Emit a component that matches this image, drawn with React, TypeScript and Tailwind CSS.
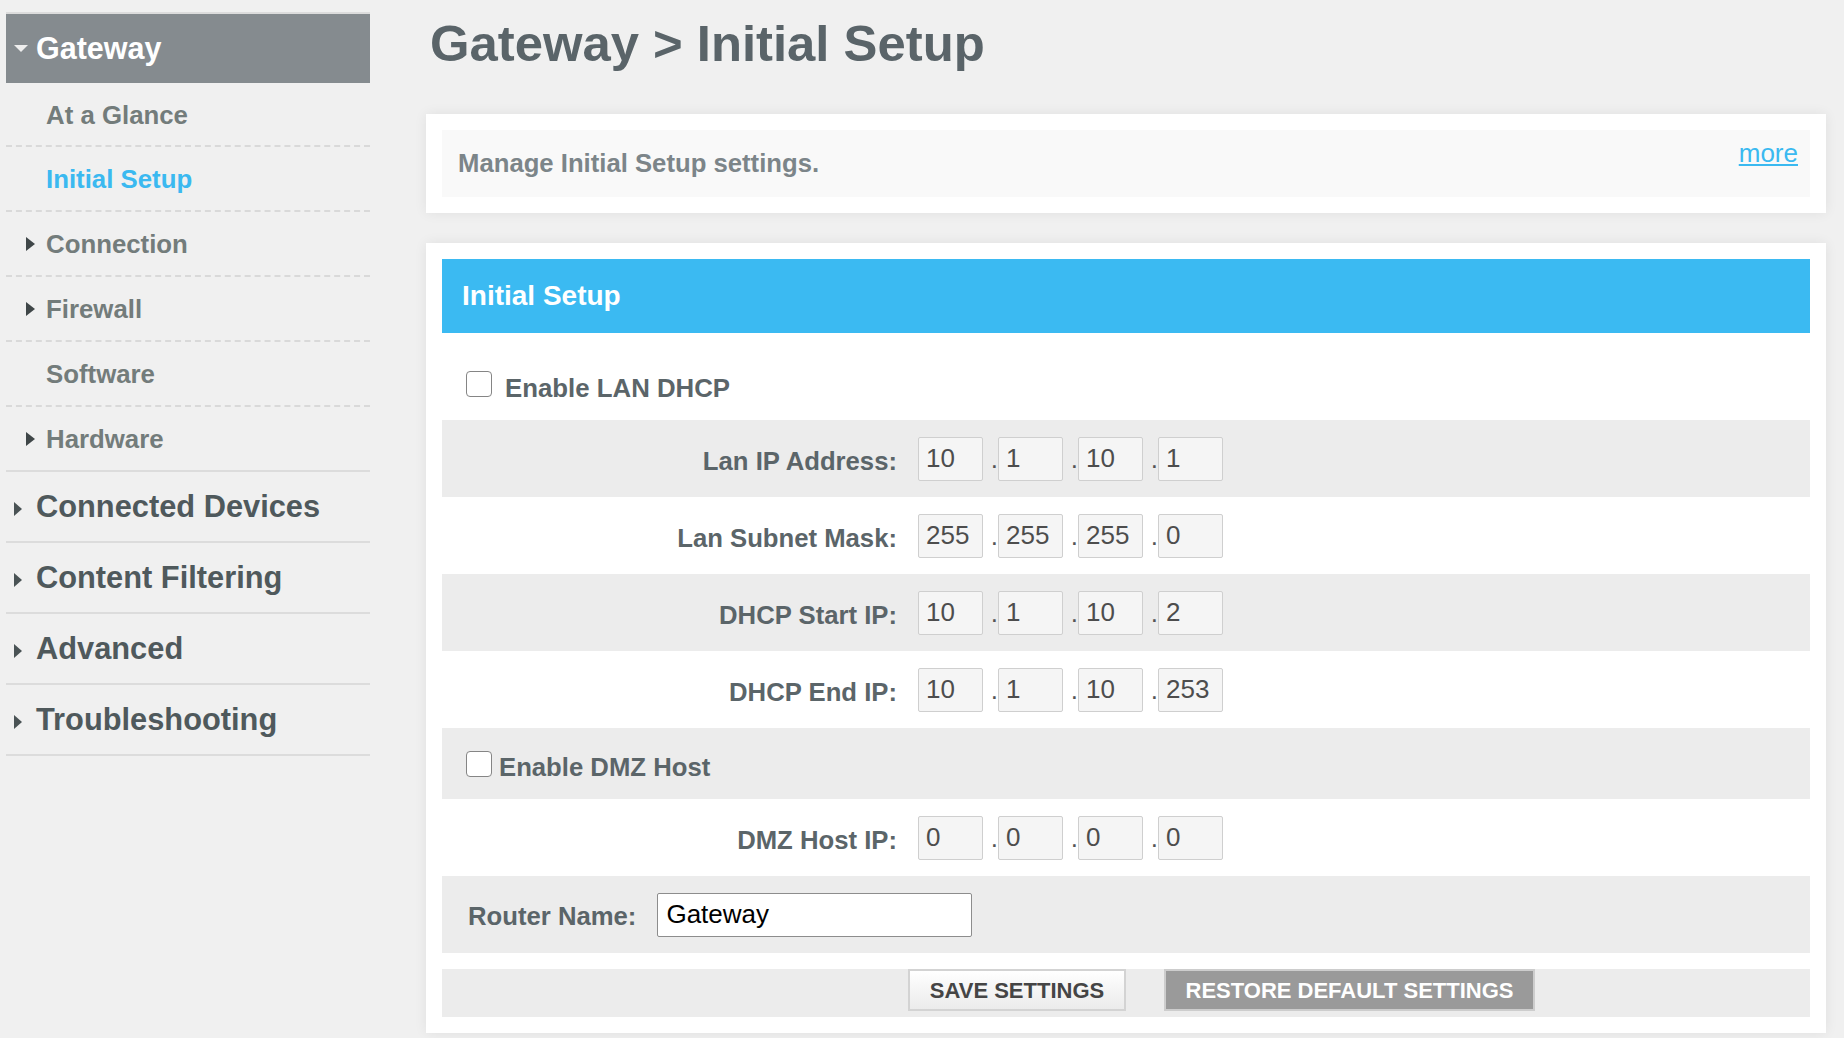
import React from "react";

function RightTri({ color = "#3f4648", w = 9, h = 14 }: { color?: string; w?: number; h?: number }) {
  return (
    <svg width={w} height={h} viewBox={`0 0 ${w} ${h}`}>
      <path d={`M0 0L${w} ${h / 2}L0 ${h}Z`} fill={color} />
    </svg>
  );
}

function SubItem({ text, arrow, active, solid, first }: { text: string; arrow?: boolean; active?: boolean; solid?: boolean; first?: boolean }) {
  return (
    <div
      className={`${first ? "h-[64px]" : "h-[65px]"} box-border border-b-2 ${solid ? "border-solid border-[#dcdcdc]" : "border-dashed border-[#d9d9d9]"} flex items-center`}
    >
      <span className="w-[40px] flex justify-end pr-[11px]">{arrow && <RightTri />}</span>
      <span className={`pt-[2px] text-[25.8px] font-bold ${active ? "text-[#3bb9f0]" : "text-[#737c7b]"}`}>{text}</span>
    </div>
  );
}

function TopItem({ text }: { text: string }) {
  return (
    <div className="h-[71px] box-border border-b-2 border-[#dcdcdc] flex items-center">
      <span className="w-[30px] pl-[8px] flex items-center pt-[4px]">
        <RightTri color="#4a5355" w={8} h={14} />
      </span>
      <span className="pt-[2px] text-[30.8px] font-bold text-[#4f595c]">{text}</span>
    </div>
  );
}

function IpRow({ label, vals, gray }: { label: string; vals: string[]; gray?: boolean }) {
  return (
    <div className={`h-[77px] flex items-center ${gray ? "bg-[#ececec]" : "bg-white"}`}>
      <div className="w-[455px] pt-[5px] text-right text-[25.7px] font-bold text-[#5b6569]">{label}</div>
      <div className="ml-[21px] flex items-center">
        {vals.map((v, i) => (
          <React.Fragment key={i}>
            {i > 0 && <span className="w-[15px] h-[44px] text-right text-[26px] leading-[44px] text-[#555]">.</span>}
            <input
              readOnly
              value={v}
              className="w-[65px] h-[44px] box-border border border-[#cfcfcf] rounded-[2px] bg-[#f5f5f5] pl-[7px] text-[26px] text-[#4d4d4d] outline-none"
            />
          </React.Fragment>
        ))}
      </div>
    </div>
  );
}

function Checkbox() {
  return <span className="block w-[26px] h-[26px] box-border border border-[#858585] rounded-[4px] bg-white shrink-0" />;
}

export default function App() {
  return (
    <div className="min-h-screen bg-[#f0f0f0] flex font-['Liberation_Sans',Arial,Helvetica,sans-serif]">
      <aside className="w-[364px] ml-[6px] mt-[12px] shrink-0">
        <div className="h-[71px] box-border border-t-2 border-[#dcdcdc] bg-[#858b8f] flex items-center">
          <span className="ml-[8px] flex">
            <svg width="14" height="7" viewBox="0 0 14 7">
              <path d="M0 0H14L7 7Z" fill="#eeeeee" />
            </svg>
          </span>
          <span className="ml-[8px] text-[30.5px] font-bold text-white">Gateway</span>
        </div>
        <SubItem text="At a Glance" first />
        <SubItem text="Initial Setup" active />
        <SubItem text="Connection" arrow />
        <SubItem text="Firewall" arrow />
        <SubItem text="Software" />
        <SubItem text="Hardware" arrow solid />
        <TopItem text="Connected Devices" />
        <TopItem text="Content Filtering" />
        <TopItem text="Advanced" />
        <TopItem text="Troubleshooting" />
      </aside>

      <main className="flex-1 ml-[56px] mr-[18px]">
        <h1 className="mt-[19px] ml-[4px] h-[51px] text-[50.8px] leading-none font-bold text-[#5a6469]">
          Gateway &gt; Initial Setup
        </h1>

        <section className="mt-[44px] bg-white p-[16px] shadow-[0_0_12px_rgba(0,0,0,0.07)]">
          <div className="h-[67px] bg-[#f9f9f9] flex justify-between pl-[16px] pr-[12px]">
            <p className="self-center text-[25.7px] font-bold text-[#7c8589]">Manage Initial Setup settings.</p>
            <a href="#" className="mt-[4px] self-start text-[26px] text-[#3bb9f0] underline">
              more
            </a>
          </div>
        </section>

        <section className="mt-[30px] bg-white p-[16px] shadow-[0_0_12px_rgba(0,0,0,0.07)]">
          <div className="h-[74px] bg-[#3bbaf2] flex items-center pl-[20px]">
            <h2 className="text-[28px] font-bold text-white">Initial Setup</h2>
          </div>

          <div className="h-[87px] flex items-start pl-[24px]">
            <span className="mt-[38px]">
              <Checkbox />
            </span>
            <span className="mt-[40px] ml-[13px] text-[25.8px] leading-[30px] font-bold text-[#5b6569]">Enable LAN DHCP</span>
          </div>

          <IpRow label="Lan IP Address:" vals={["10", "1", "10", "1"]} gray />
          <IpRow label="Lan Subnet Mask:" vals={["255", "255", "255", "0"]} />
          <IpRow label="DHCP Start IP:" vals={["10", "1", "10", "2"]} gray />
          <IpRow label="DHCP End IP:" vals={["10", "1", "10", "253"]} />

          <div className="h-[71px] bg-[#ececec] flex items-center pl-[24px]">
            <Checkbox />
            <span className="ml-[7px] mt-[7px] text-[25.7px] font-bold text-[#5b6569]">Enable DMZ Host</span>
          </div>

          <IpRow label="DMZ Host IP:" vals={["0", "0", "0", "0"]} />

          <div className="h-[77px] bg-[#ececec] flex items-center pl-[26px]">
            <span className="pt-[3px] text-[25.7px] font-bold text-[#5b6569]">Router Name:</span>
            <input
              readOnly
              value="Gateway"
              className="ml-[21px] w-[315px] h-[44px] box-border border border-[#8d8d8d] rounded-[2px] bg-white pl-[8px] text-[26px] text-black outline-none"
            />
          </div>

          <div className="h-[16px] bg-white" />

          <div className="h-[48px] bg-[#ececec] flex items-start pl-[466px]">
            <button className="w-[218px] h-[42px] box-border border-2 border-[#d3d3d3] bg-gradient-to-b from-white to-[#ebebeb] text-[22px] font-bold text-[#454545]">
              SAVE SETTINGS
            </button>
            <button className="ml-[38px] w-[371px] h-[42px] box-border border-2 border-[#cdcdcd] bg-[#9a9a9a] text-[22px] font-bold text-white">
              RESTORE DEFAULT SETTINGS
            </button>
          </div>
        </section>
      </main>
    </div>
  );
}
